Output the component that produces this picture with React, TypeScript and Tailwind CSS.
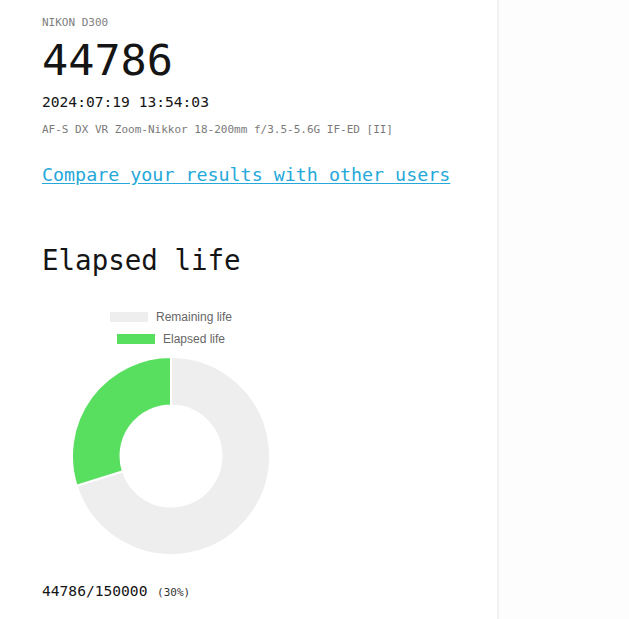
import React from "react";

const mono = { fontFamily: '"DejaVu Sans Mono", "Liberation Mono", monospace' };

function Donut() {
  const cx = 129;
  const cy = 100;
  const ro = 99;
  const ri = 50.5;
  const frac = 44786 / 150000;
  const pt = (r: number, deg: number) => {
    const a = (deg * Math.PI) / 180;
    return [cx + r * Math.sin(a), cy - r * Math.cos(a)];
  };
  const arc = (a0: number, a1: number) => {
    const [x0, y0] = pt(ro, a0);
    const [x1, y1] = pt(ro, a1);
    const [x2, y2] = pt(ri, a1);
    const [x3, y3] = pt(ri, a0);
    const large = a1 - a0 > 180 ? 1 : 0;
    return `M${x0} ${y0} A${ro} ${ro} 0 ${large} 1 ${x1} ${y1} L${x2} ${y2} A${ri} ${ri} 0 ${large} 0 ${x3} ${y3} Z`;
  };
  const split = 360 * (1 - frac);
  return (
    <svg width="258" height="200" viewBox="0 0 258 200" className="block">
      <path d={arc(0, split)} fill="#eeeeee" stroke="#ffffff" strokeWidth="2" strokeLinejoin="miter" />
      <path d={arc(split, 359.999)} fill="#58df60" stroke="#ffffff" strokeWidth="2" strokeLinejoin="miter" />
    </svg>
  );
}

export default function App() {
  return (
    <div className="flex min-h-screen bg-white">
      <div className="w-[499px] shrink-0 border-r-2 border-[#f1f1f1] pl-[42px] pt-[15px]" style={mono}>
        <div className="text-[11px] leading-[16px] text-[#808080]">NIKON D300</div>
        <div className="mt-[4px] text-[43.5px] leading-[50px] text-[#151515]">44786</div>
        <div className="mt-[7px] text-[14.6px] leading-[20px] text-[#151515]">2024:07:19 13:54:03</div>
        <div className="mt-[9.5px] text-[11px] leading-[16px] text-[#7a7a7a]">
          AF-S DX VR Zoom-Nikkor 18-200mm f/3.5-5.6G IF-ED [II]
        </div>
        <div className="mt-[25px] text-[18.33px] leading-[24px]">
          <a href="#" className="text-[#25a8da] underline underline-offset-[2px]">
            Compare your results with other users
          </a>
        </div>
        <h2 className="mt-[57px] text-[27.5px] leading-[32px] text-[#151515]">Elapsed life</h2>
        <div className="mt-[30px] w-[258px]">
          <div
            className="flex flex-col items-center text-[12px] text-[#666666]"
            style={{ fontFamily: '"Liberation Sans", Arial, sans-serif' }}
          >
            <div className="flex h-[22px] items-center gap-[8px]">
              <span className="block h-[10px] w-[38px] bg-[#eeeeee]" />
              <span>Remaining life</span>
            </div>
            <div className="flex h-[22px] items-center gap-[8px]">
              <span className="block h-[10px] w-[38px] bg-[#58df60]" />
              <span>Elapsed life</span>
            </div>
          </div>
          <div className="mt-[6px]">
            <Donut />
          </div>
        </div>
        <div className="mt-[25px] leading-[20px] text-[#151515]">
          <span className="text-[14.6px]">44786/150000</span>{" "}
          <span className="text-[11px] text-[#333333]">(30%)</span>
        </div>
      </div>
      <div className="flex-1 bg-[#fdfdfd]" />
    </div>
  );
}
